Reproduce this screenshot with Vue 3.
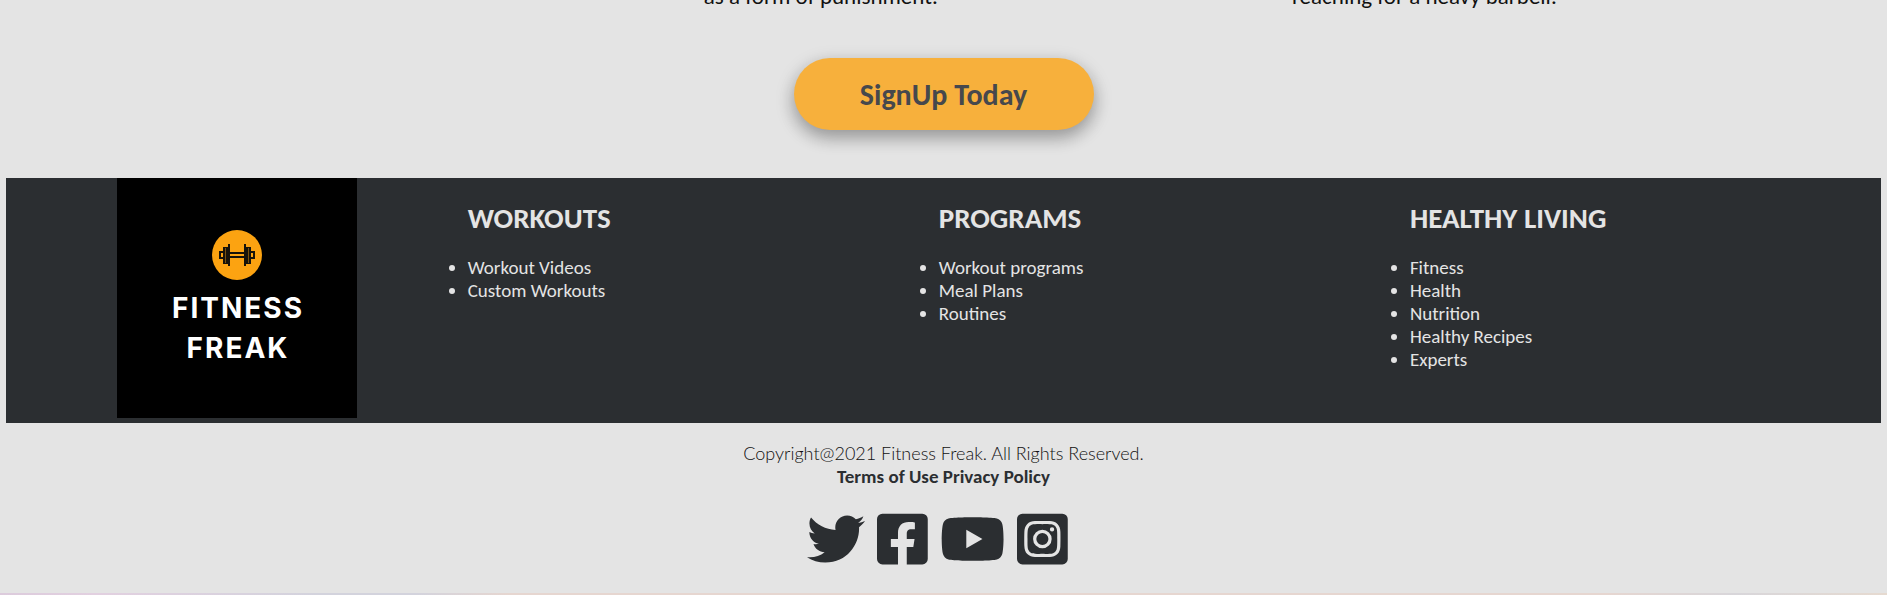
<script setup>
const groups = [
  { title: 'WORKOUTS', items: ['Workout Videos', 'Custom Workouts'] },
  { title: 'PROGRAMS', items: ['Workout programs', 'Meal Plans', 'Routines'] },
  { title: 'HEALTHY LIVING', items: ['Fitness', 'Health', 'Nutrition', 'Healthy Recipes', 'Experts'] },
]

const socials = [
  {
    name: 'Twitter',
    box: '0 0 512 512',
    path: 'M459.37 151.716c.325 4.548.325 9.097.325 13.645 0 138.72-105.583 298.558-298.558 298.558-59.452 0-114.68-17.219-161.137-47.106 8.447.974 16.568 1.299 25.34 1.299 49.055 0 94.213-16.568 130.274-44.832-46.132-.975-84.792-31.188-98.112-72.772 6.498.974 12.995 1.624 19.818 1.624 9.421 0 18.843-1.3 27.614-3.573-48.081-9.747-84.143-51.98-84.143-102.985v-1.299c13.969 7.797 30.214 12.67 47.431 13.319-28.264-18.843-46.781-51.005-46.781-87.391 0-19.492 5.197-37.36 14.294-52.954 51.655 63.675 129.3 105.258 216.365 109.807-1.624-7.797-2.599-15.918-2.599-24.04 0-57.828 46.782-104.934 104.934-104.934 30.213 0 57.502 12.67 76.67 33.137 23.715-4.548 46.456-13.32 66.599-25.34-7.798 24.366-24.366 44.833-46.132 57.827 21.117-2.273 41.584-8.122 60.426-16.243-14.292 20.791-32.161 39.308-52.628 54.253z',
  },
  {
    name: 'Facebook',
    box: '0 0 448 512',
    path: 'M400 32H48A48 48 0 0 0 0 80v352a48 48 0 0 0 48 48h137.25V327.69h-63V256h63v-54.64c0-62.15 37-96.48 93.67-96.48 27.14 0 55.52 4.84 55.52 4.84v61h-31.27c-30.81 0-40.42 19.12-40.42 38.73V256h68.78l-11 71.69h-57.78V480H400a48 48 0 0 0 48-48V80a48 48 0 0 0-48-48z',
  },
  {
    name: 'YouTube',
    box: '0 0 576 512',
    path: 'M549.655 124.083c-6.281-23.65-24.787-42.276-48.284-48.597C458.781 64 288 64 288 64S117.22 64 74.629 75.486c-23.497 6.322-42.003 24.947-48.284 48.597-11.412 42.867-11.412 132.305-11.412 132.305s0 89.438 11.412 132.305c6.281 23.65 24.787 41.5 48.284 47.821C117.22 448 288 448 288 448s170.78 0 213.371-11.486c23.497-6.321 42.003-24.171 48.284-47.821 11.412-42.867 11.412-132.305 11.412-132.305s0-89.438-11.412-132.305zm-317.51 213.508V175.185l142.739 81.205-142.739 81.201z',
  },
  {
    name: 'Instagram',
    box: '0 0 448 512',
    path: 'M224 202.66A53.34 53.34 0 1 0 277.36 256 53.38 53.38 0 0 0 224 202.66zm124.71-41a54 54 0 0 0-30.41-30.41c-21-8.29-71-6.43-94.3-6.43s-73.25-1.93-94.31 6.43a54 54 0 0 0-30.41 30.41c-8.28 21-6.43 71.05-6.43 94.33s-1.85 73.27 6.47 94.34a54 54 0 0 0 30.41 30.41c21 8.29 71 6.43 94.31 6.43s73.24 1.93 94.3-6.43a54 54 0 0 0 30.41-30.41c8.35-21 6.43-71.05 6.43-94.33s1.92-73.26-6.43-94.33zM224 338a82 82 0 1 1 82-82 81.9 81.9 0 0 1-82 82zm85.38-148.3a19.14 19.14 0 1 1 19.13-19.14 19.1 19.1 0 0 1-19.09 19.18zM400 32H48A48 48 0 0 0 0 80v352a48 48 0 0 0 48 48h352a48 48 0 0 0 48-48V80a48 48 0 0 0-48-48zm-17.12 290c-1.29 25.63-7.14 48.34-25.85 67s-41.4 24.63-67 25.85c-26.41 1.49-105.59 1.49-132 0-25.63-1.29-48.26-7.15-67-25.85s-24.63-41.42-25.85-67c-1.49-26.42-1.49-105.61 0-132 1.29-25.63 7.07-48.34 25.85-67s41.47-24.56 67-25.78c26.41-1.49 105.59-1.49 132 0 25.63 1.29 48.33 7.15 67 25.85s24.63 41.42 25.85 67.05c1.49 26.32 1.49 105.44 0 131.88z',
  },
]
</script>

<template>
  <div class="page">
    <section class="features">
      <p>as a form of punishment.</p>
      <p>reaching for a heavy barbell.</p>
    </section>

    <div class="cta">
      <button type="button" class="signup">SignUp Today</button>
    </div>

    <footer>
      <div class="links">
        <svg class="logo" viewBox="0 0 240 240" role="img" aria-label="Fitness Freak">
          <rect width="240" height="240" fill="#000" />
          <circle cx="120" cy="77" r="25" fill="#fca311" />
          <g fill="#17130a">
            <rect x="111" y="66" width="2" height="22" />
            <rect x="127" y="66" width="2" height="22" />
            <rect x="106" y="69" width="5" height="17" />
            <rect x="129" y="69" width="5" height="17" />
            <rect x="113" y="74" width="14" height="2" />
            <rect x="113" y="78" width="14" height="2" />
          </g>
          <path d="M106 74h-3v6h3M134 74h3v6h-3" fill="none" stroke="#17130a" stroke-width="2" />
          <path d="M108.500 70v15M131.500 70v15" stroke="#7a5210" />
          <text x="121" y="140" class="logo-text">FITNESS</text>
          <text x="121" y="180" class="logo-text">FREAK</text>
        </svg>
        <section v-for="group in groups" :key="group.title">
          <h2>{{ group.title }}</h2>
          <ul>
            <li v-for="item in group.items" :key="item">{{ item }}</li>
          </ul>
        </section>
      </div>

      <div class="legal">
        <p class="copyright">Copyright@2021 Fitness Freak. All Rights Reserved.</p>
        <p class="terms">Terms of Use Privacy Policy</p>
      </div>

      <nav class="social" aria-label="Social media">
        <a v-for="s in socials" :key="s.name" href="#" :aria-label="s.name">
          <svg :viewBox="s.box"><path :d="s.path" /></svg>
        </a>
      </nav>
    </footer>
    <div class="strip"></div>
  </div>
</template>

<style>
body {
  margin: 0;
  background: #e4e4e4;
}
</style>

<style scoped>
.page {
  font-family: Calibri, Carlito, Lato, sans-serif;
  font-size: 19px;
  line-height: 23px;
  color: #2b2e31;
}
p, h2, ul {
  margin: 0;
}
.features {
  display: grid;
  grid-template-columns: 588fr 595fr;
  margin-top: -16px;
  padding-left: 37.3%;
  font-size: 23px;
  line-height: 24px;
  color: #111;
}
.cta {
  display: flex;
  justify-content: center;
  padding: 50px 0 48px;
}
.signup {
  min-width: 300px;
  padding: 19px 64px 17px;
  border: 0;
  border-radius: 36px;
  background: #f7b03c;
  color: #46484d;
  font: bold 30px/36px Calibri, Carlito, Lato, sans-serif;
  box-shadow: 0 8px 16px rgba(0, 0, 0, 0.2), 0 6px 20px rgba(0, 0, 0, 0.19);
  cursor: pointer;
}
.links {
  display: grid;
  grid-template-columns: 98fr 100fr 100fr 100fr;
  margin: 0 6px;
  padding-bottom: 5px;
  background: #2b2e31;
  color: #e4e4e4;
}
.logo {
  display: block;
  width: 240px;
  margin-left: 24%;
}
.logo-text {
  font: 700 28px Inter, sans-serif;
  letter-spacing: 2px;
  fill: #fff;
  text-anchor: middle;
}
h2 {
  padding-top: 24px;
  font-size: 29px;
  line-height: 32px;
}
ul {
  padding: 22px 0 0;
}
.legal {
  padding-top: 19px;
  text-align: center;
}
.copyright {
  font-family: "Calibri Light", Lato, sans-serif;
  font-weight: 300;
  font-size: 18px;
  color: #111;
}
.terms {
  font-weight: bold;
}
.social {
  display: flex;
  justify-content: center;
  gap: 12px;
  padding: 22px 12px 25px 0;
}
.social svg {
  display: block;
  height: 58px;
  fill: #2b2e31;
}
.strip {
  height: 2px;
  background: linear-gradient(90deg, #dccbdc, #e2d0e0 5%, #d3d3dd 17%, #d3d3dd 22%, #e6d6d0 27%, #e6d6d0 85%, #d8d6da 92%, #e6dad0);
}
</style>
